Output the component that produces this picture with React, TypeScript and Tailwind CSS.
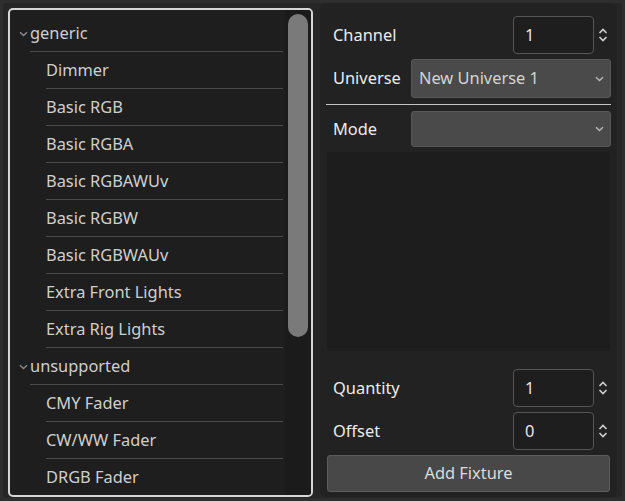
import React from "react";

const groups = [
  {
    name: "generic",
    items: [
      "Dimmer",
      "Basic RGB",
      "Basic RGBA",
      "Basic RGBAWUv",
      "Basic RGBW",
      "Basic RGBWAUv",
      "Extra Front Lights",
      "Extra Rig Lights",
    ],
  },
  {
    name: "unsupported",
    items: ["CMY Fader", "CW/WW Fader", "DRGB Fader"],
  },
];

function Chevron({ className = "" }: { className?: string }) {
  return (
    <svg width="9" height="6" viewBox="0 0 9 6" className={className}>
      <path d="M1 1.2 L4.5 4.6 L8 1.2" fill="none" stroke="currentColor" strokeWidth="1.4" />
    </svg>
  );
}

function SpinArrows() {
  return (
    <svg width="10" height="16" viewBox="0 0 10 16" className="text-[#d0d0d0]">
      <path d="M1.5 6 L5 2.5 L8.5 6" fill="none" stroke="currentColor" strokeWidth="1.6" />
      <path d="M1.5 10 L5 13.5 L8.5 10" fill="none" stroke="currentColor" strokeWidth="1.6" />
    </svg>
  );
}

function SpinBox({ value }: { value: string }) {
  return (
    <div className="flex items-center gap-[4px]">
      <div className="flex h-[38px] w-[81px] items-center rounded-[4px] border border-[#555] bg-[#1e1e1e] px-[11px] text-[#e6e6e6]">
        {value}
      </div>
      <SpinArrows />
    </div>
  );
}

function Select({ value, height }: { value: string; height: string }) {
  return (
    <div
      className={`flex ${height} w-[200px] items-center justify-between rounded-[3px] border border-[#575757] bg-[#4a4a4a] pl-[7px] pr-[6px] text-[#d4d4d4]`}
    >
      <span>{value}</span>
      <Chevron className="text-[#b8b8b8]" />
    </div>
  );
}

export default function App() {
  return (
    <div
      className="h-[501px] w-[625px] overflow-hidden bg-[#2e2e2e] p-[3px] text-[16.4px]"
      style={{ fontFamily: '"Noto Sans", "Open Sans", sans-serif' }}
    >
      <div className="flex h-[495px] rounded-[4px] bg-[#262626]">
        {/* fixture tree */}
        <div className="ml-[5px] mt-[5px] flex h-[489px] w-[305px] overflow-hidden rounded-[5px] border-2 border-[#d6d6d6] bg-[#1e1e1e]">
          <div className="mt-[5px] w-[273px] shrink-0">
            {groups.map((g) => (
              <div key={g.name}>
                <div className="flex h-[37px] items-center">
                  <div className="flex w-[20px] justify-end pr-[2px] pt-[1px]">
                    <Chevron className="text-[#8a8a8a]" />
                  </div>
                  <div className="flex h-full flex-1 items-center border-b border-[#4a4a4a] text-[#cfcfcf]">
                    {g.name}
                  </div>
                </div>
                {g.items.map((it) => (
                  <div key={it} className="ml-[36px] flex h-[37px] items-center border-b border-[#4a4a4a] text-[#cfcfcf]">
                    {it}
                  </div>
                ))}
              </div>
            ))}
          </div>
          <div className="ml-[2px] flex w-[26px] justify-center bg-[#1b1b1b] pt-[4px]">
            <div className="h-[323px] w-[20px] rounded-full bg-[#7a7a7a]" />
          </div>
        </div>

        {/* properties */}
        <div className="ml-[7px] flex h-[494px] w-[297px] flex-col rounded-[6px] bg-[#222222] px-[6px] pt-[13px] text-[#ececec]">
          <div className="flex items-center justify-between pl-[7px] pr-[3px]">
            <span>Channel</span>
            <SpinBox value="1" />
          </div>
          <div className="mt-[5px] flex items-center justify-between pl-[7px]">
            <span>Universe</span>
            <Select value="New Universe 1" height="h-[39px]" />
          </div>
          <div className="mt-[6px] h-[1px] bg-[#c4c4c4]" />
          <div className="mt-[6px] flex items-center justify-between pl-[7px]">
            <span>Mode</span>
            <Select value="" height="h-[36px]" />
          </div>
          <div className="ml-[1px] mr-[1px] mt-[5px] h-[199px] rounded-[4px] bg-[#1d1d1d]" />
          <div className="mt-[18px] flex items-center justify-between pl-[7px] pr-[3px]">
            <span>Quantity</span>
            <SpinBox value="1" />
          </div>
          <div className="mt-[5px] flex items-center justify-between pl-[7px] pr-[3px]">
            <span>Offset</span>
            <SpinBox value="0" />
          </div>
          <div className="ml-[1px] mr-[1px] mt-[5px] flex h-[37px] items-center justify-center rounded-[3px] border border-[#5c5c5c] bg-[#484848] text-[#dcdcdc]">
            Add Fixture
          </div>
        </div>
      </div>
    </div>
  );
}
